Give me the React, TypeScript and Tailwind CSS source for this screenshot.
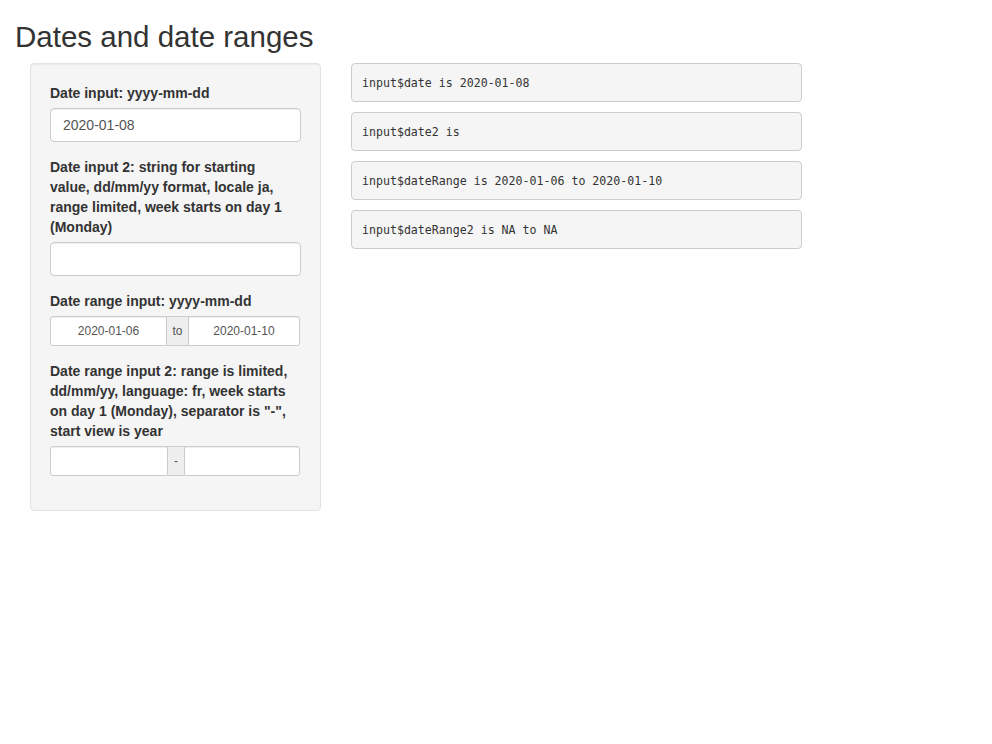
import React from "react";

const labelCls = "block text-[14px] font-bold leading-[20px] mb-[5px] text-[#333]";

function RangeInput({ from, to, sep, widths }: { from: string; to: string; sep: string; widths: [string, string, string] }) {
    return (
        <div className="flex h-[30px] text-[12px] text-[#555]">
            <div className={`${widths[0]} h-full bg-white border border-[#ccc] rounded-l-[3px] flex items-center justify-center shadow-[inset_0_1px_1px_rgba(0,0,0,0.075)]`}>{from}</div>
            <div className={`${widths[1]} h-full bg-[#eee] border-y border-[#ccc] flex items-center justify-center`}>{sep}</div>
            <div className={`${widths[2]} h-full bg-white border border-[#ccc] rounded-r-[3px] flex items-center justify-center shadow-[inset_0_1px_1px_rgba(0,0,0,0.075)]`}>{to}</div>
        </div>
    );
}

function Out({ text }: { text: string }) {
    return (
        <pre className="w-[451px] mb-[10px] px-[10px] py-[9.5px] bg-[#f5f5f5] border border-[#ccc] rounded-[4px] text-[11.6px] leading-[18px] text-[#333] whitespace-pre" style={{ fontFamily: '"DejaVu Sans Mono", monospace' }}>
            {text}
        </pre>
    );
}

export default function App() {
    return (
        <div className="min-h-[744px] bg-white px-[15px] text-[14px] text-[#333]" style={{ fontFamily: '"Liberation Sans", Arial, sans-serif' }}>
            <h2 className="text-[29.5px] leading-[33px] font-normal mt-[20px] mb-[10px]">Dates and date ranges</h2>
            <div className="flex items-start">
                <div className="ml-[15px] w-[291px] bg-[#f5f5f5] border border-[#e3e3e3] rounded-[4px] p-[19px] shadow-[inset_0_1px_1px_rgba(0,0,0,0.05)]">
                    <div className="mb-[15px]">
                        <label className={labelCls}>Date input: yyyy-mm-dd</label>
                        <div className="h-[34px] bg-white border border-[#ccc] rounded-[4px] px-[12px] flex items-center text-[14px] text-[#555] shadow-[inset_0_1px_1px_rgba(0,0,0,0.075)]">2020-01-08</div>
                    </div>
                    <div className="mb-[15px]">
                        <label className={labelCls}>
                            Date input 2: string for starting<br />
                            value, dd/mm/yy format, locale ja,<br />
                            range limited, week starts on day 1<br />
                            (Monday)
                        </label>
                        <div className="h-[34px] bg-white border border-[#ccc] rounded-[4px] shadow-[inset_0_1px_1px_rgba(0,0,0,0.075)]"></div>
                    </div>
                    <div className="mb-[15px]">
                        <label className={labelCls}>Date range input: yyyy-mm-dd</label>
                        <RangeInput from="2020-01-06" to="2020-01-10" sep="to" widths={["w-[117px]", "w-[21px]", "w-[112px]"]} />
                    </div>
                    <div className="mb-[15px]">
                        <label className={labelCls}>
                            Date range input 2: range is limited,<br />
                            dd/mm/yy, language: fr, week starts<br />
                            on day 1 (Monday), separator is "-",<br />
                            start view is year
                        </label>
                        <RangeInput from="" to="" sep="-" widths={["w-[118px]", "w-[16px]", "w-[116px]"]} />
                    </div>
                </div>
                <div className="ml-[30px]">
                    <Out text="input$date is 2020-01-08" />
                    <Out text="input$date2 is" />
                    <Out text="input$dateRange is 2020-01-06 to 2020-01-10" />
                    <Out text="input$dateRange2 is NA to NA" />
                </div>
            </div>
        </div>
    );
}
